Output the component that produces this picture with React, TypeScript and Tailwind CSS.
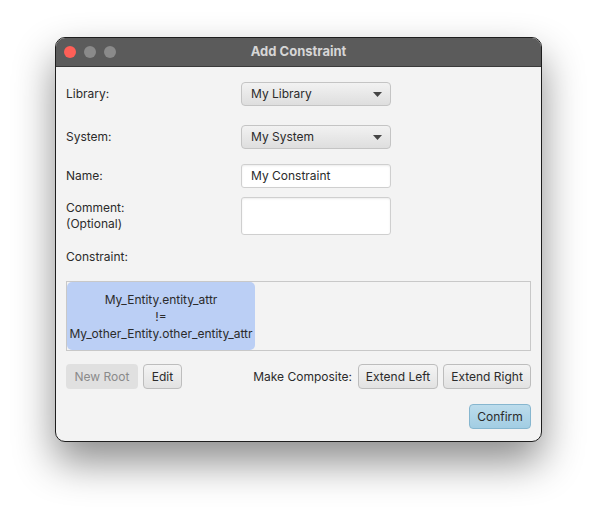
const font = { fontFamily: 'Inter, "Liberation Sans", sans-serif' };

function Combo({ value }: { value: string }) {
  return (
    <div className="flex h-[24px] w-[150px] items-center justify-between rounded-[4px] border border-[#c4c4c4] bg-gradient-to-b from-[#f2f2f2] to-[#dedede] pl-[9px] pr-[8px] text-[12px] text-[#2b2b2b]">
      <span>{value}</span>
      <svg width="9" height="5" viewBox="0 0 9 5">
        <path d="M0 0 L9 0 L4.5 5 Z" fill="#444" />
      </svg>
    </div>
  );
}

function Btn({ label, disabled, w }: { label: string; disabled?: boolean; w: string }) {
  return (
    <div
      className={
        disabled
          ? `flex h-[25px] ${w} items-center justify-center rounded-[4px] bg-[#e0e0e0] text-[12px] text-[#8a8a8a]`
          : `flex h-[25px] ${w} items-center justify-center rounded-[4px] border border-[#bdbdbd] bg-gradient-to-b from-[#f4f4f4] to-[#e2e2e2] text-[12px] text-[#2b2b2b]`
      }
    >
      {label}
    </div>
  );
}

export default function App() {
  return (
    <div className="h-[515px] w-[597px] bg-white pl-[55px] pt-[37px]" style={font}>
      <div className="flex h-[405px] w-[487px] flex-col overflow-hidden rounded-[10px] border border-[#1e1e1e] bg-[#f3f3f3] shadow-[0_20px_40px_rgba(0,0,0,0.45)]">
        {/* title bar */}
        <div className="relative flex h-[29px] shrink-0 items-center border-b border-[#3a3a3a] bg-[#5b5b5b] pl-[8px]">
          <div className="flex gap-[8px]">
            <span className="h-[12px] w-[12px] rounded-full bg-[#fe5f57]" />
            <span className="h-[12px] w-[12px] rounded-full bg-[#8a8a8a]" />
            <span className="h-[12px] w-[12px] rounded-full bg-[#8a8a8a]" />
          </div>
          <div className="absolute inset-0 flex items-center justify-center text-[13px] font-bold text-[#d6d6d6]">
            Add Constraint
          </div>
        </div>

        {/* content */}
        <div className="flex flex-col px-[10px] text-[12px] text-[#2b2b2b]">
          <div className="mt-[15px] grid grid-cols-[175px_150px] items-center">
            <span>Library:</span>
            <Combo value="My Library" />
          </div>
          <div className="mt-[19px] grid grid-cols-[175px_150px] items-center">
            <span>System:</span>
            <Combo value="My System" />
          </div>
          <div className="mt-[15px] grid grid-cols-[175px_150px] items-center">
            <span>Name:</span>
            <div className="flex h-[24px] items-center rounded-[3px] border border-[#cfcfcf] bg-white pl-[9px] shadow-[inset_0_1px_2px_rgba(0,0,0,0.08)]">
              My Constraint
            </div>
          </div>
          <div className="mt-[9px] grid grid-cols-[175px_150px] items-start">
            <span className="pt-[3px] leading-[16px]">
              Comment:
              <br />
              (Optional)
            </span>
            <div className="h-[38px] rounded-[3px] border border-[#cfcfcf] bg-white shadow-[inset_0_1px_2px_rgba(0,0,0,0.08)]" />
          </div>
          <div className="mt-[14px] leading-[16px]">Constraint:</div>
          <div className="mt-[16px] flex h-[70px] w-[465px] border border-[#c8c8c8] bg-[#f3f3f3]">
            <div className="flex w-[188px] flex-col items-center justify-center rounded-[5px] bg-[#bbcff5] leading-[17px] text-[#2b2b2b]">
              <span>My_Entity.entity_attr</span>
              <span>!=</span>
              <span>My_other_Entity.other_entity_attr</span>
            </div>
          </div>
          <div className="mt-[13px] flex items-center">
            <Btn label="New Root" disabled w="w-[72px]" />
            <div className="ml-[5px]">
              <Btn label="Edit" w="w-[39px]" />
            </div>
            <span className="ml-auto mr-[6px]">Make Composite:</span>
            <Btn label="Extend Left" w="w-[80px]" />
            <div className="ml-[5px]">
              <Btn label="Extend Right" w="w-[88px]" />
            </div>
          </div>
          <div className="mt-[15px] flex justify-end">
            <div className="flex h-[25px] w-[62px] items-center justify-center rounded-[4px] border border-[#86b6cf] bg-gradient-to-b from-[#bcdcec] to-[#a2cde3] text-[12px] text-[#2b2b2b]">
              Confirm
            </div>
          </div>
        </div>
      </div>
    </div>
  );
}
